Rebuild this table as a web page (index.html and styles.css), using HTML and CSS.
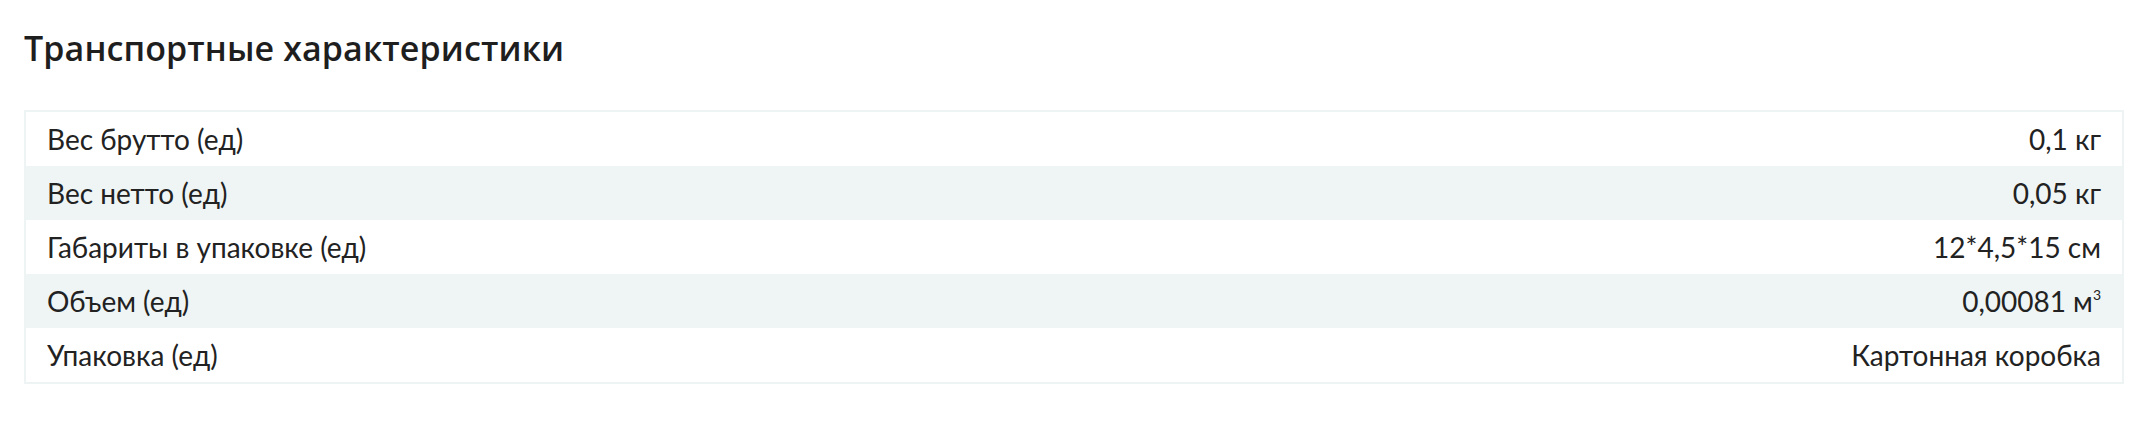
FILE: index.html
```html
<!DOCTYPE html>
<html lang="ru">
<head>
<meta charset="utf-8">
<title>Транспортные характеристики</title>
<link rel="stylesheet" href="styles.css">
</head>
<body>
<section class="specs">
  <h2 class="specs__title">Транспортные характеристики</h2>
  <div class="specs__table">
    <div class="specs__row"><span class="specs__name">Вес брутто (ед)</span><span class="specs__value">0,1 кг</span></div>
    <div class="specs__row specs__row--alt"><span class="specs__name">Вес нетто (ед)</span><span class="specs__value">0,05 кг</span></div>
    <div class="specs__row"><span class="specs__name">Габариты в упаковке (ед)</span><span class="specs__value">12*4,5*15 см</span></div>
    <div class="specs__row specs__row--alt"><span class="specs__name">Объем (ед)</span><span class="specs__value">0,00081 м<sup class="specs__sup">3</sup></span></div>
    <div class="specs__row"><span class="specs__name">Упаковка (ед)</span><span class="specs__value">Картонная коробка</span></div>
  </div>
</section>
</body>
</html>
```

FILE: styles.css
```css
html, body {
  margin: 0;
  padding: 0;
  background: #ffffff;
}

.specs {
  padding: 24px 14px 0 24px;
}

.specs__title {
  margin: 0 0 38px 0;
  font-family: "Open Sans", "Noto Sans", sans-serif;
  font-weight: 600;
  font-size: 34px;
  line-height: 48px;
  color: #1e1e1e;
  letter-spacing: 0.1px;
}

.specs__table {
  border: 2px solid #eef3f3;
  display: flex;
  flex-direction: column;
}

.specs__row {
  display: flex;
  justify-content: space-between;
  align-items: center;
  height: 54px;
  padding: 0 21px 0 21px;
  font-family: "Lato", "Liberation Sans", sans-serif;
  font-size: 28px;
  color: #222222;
}

.specs__row--alt {
  background: #eff5f5;
}

.specs__sup {
  font-size: 14px;
  vertical-align: 12px;
  line-height: 0;
}
```
